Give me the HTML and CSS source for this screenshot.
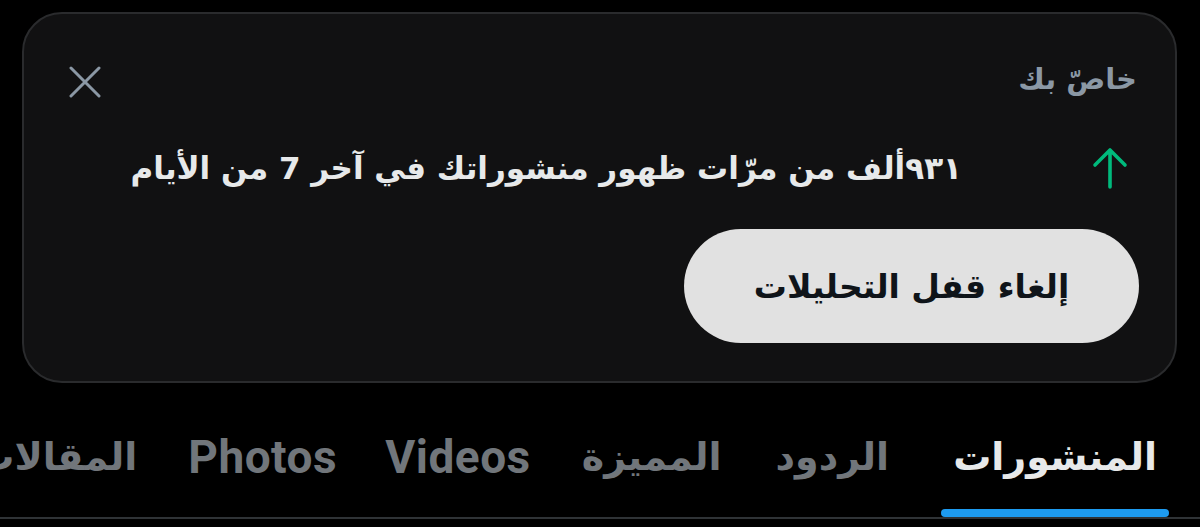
FILE: index.html
```html
<!DOCTYPE html>
<html lang="ar" dir="rtl">
<head>
<meta charset="utf-8">
<title>Profile</title>
<link rel="stylesheet" href="styles.css">
</head>
<body>
  <section class="card">
    <div class="card-head">
      <span class="eyebrow">خاصّ بك</span>
      <button class="close" aria-label="إغلاق">
        <svg viewBox="0 0 32 32" width="32" height="32"><path d="M2 2 L30 30 M30 2 L2 30" stroke="#8b98a5" stroke-width="3" stroke-linecap="round" fill="none"/></svg>
      </button>
    </div>
    <div class="stat">
      <svg class="arrow" viewBox="0 0 36 42" width="36" height="42"><path d="M18 40 V3 M3 18 L18 3 L33 18" stroke="#00ba7c" stroke-width="3.6" stroke-linecap="round" stroke-linejoin="round" fill="none"/></svg>
      <p class="stat-text">٩٣١ألف من مرّات ظهور منشوراتك في آخر 7 من الأيام</p>
    </div>
    <button class="cta">إلغاء قفل التحليلات</button>
  </section>
  <nav class="tabs">
    <a class="tab active"><span class="tab-inner"><span class="label">المنشورات</span><span class="bar"></span></span></a>
    <a class="tab"><span class="tab-inner"><span class="label">الردود</span><span class="bar"></span></span></a>
    <a class="tab"><span class="tab-inner"><span class="label">المميزة</span><span class="bar"></span></span></a>
    <a class="tab"><span class="tab-inner"><span class="label latin">Videos</span><span class="bar"></span></span></a>
    <a class="tab"><span class="tab-inner"><span class="label latin">Photos</span><span class="bar"></span></span></a>
    <a class="tab"><span class="tab-inner"><span class="label">المقالات</span><span class="bar"></span></span></a>
  </nav>
</body>
</html>
```
FILE: styles.css
```css
* { box-sizing: border-box; }
html, body {
  margin: 0;
  padding: 0;
  background: #000;
  width: 1200px;
  height: 527px;
  overflow: hidden;
}
body {
  font-family: "DejaVu Sans", sans-serif;
  color: #e7e9ea;
}
.card {
  margin: 12px 23px 0 22px;
  height: 371px;
  background: #111112;
  border: 2px solid #2a2b2d;
  border-radius: 40px;
  padding: 45px 37px 0 37px;
  display: flex;
  flex-direction: column;
  align-items: flex-start;
}
.card-head {
  width: 100%;
  height: 40px;
  display: flex;
  justify-content: space-between;
  align-items: center;
}
.eyebrow {
  font-size: 29px;
  font-weight: bold;
  color: #8b98a5;
  line-height: 40px;
  margin-right: 1px;
}
.close {
  background: none;
  border: 0;
  padding: 0;
  margin: 6px 0 0 8px;
  width: 32px;
  height: 32px;
  display: block;
}
.close svg { display: block; }
.stat {
  margin-top: 47px;
  display: flex;
  align-items: center;
  height: 44px;
}
.arrow {
  display: block;
  margin-right: 10px;
  flex: none;
}
.stat-text {
  margin: 0 130px 0 0;
  font-size: 31px;
  font-weight: bold;
  line-height: 44px;
  white-space: nowrap;
  color: #e7e9ea;
}
.cta {
  margin-top: 39px;
  width: 455px;
  height: 114px;
  border: 0;
  border-radius: 57px;
  background: #e1e1e1;
  color: #0f1419;
  font-family: "DejaVu Sans", sans-serif;
  font-size: 33px;
  font-weight: bold;
  padding: 0;
  margin-right: -1px;
}
.tabs {
  display: flex;
  flex-wrap: nowrap;
  overflow: hidden;
  padding: 46px 16px 0 0;
  height: 136px;
  border-bottom: 2px solid #2f3336;
}
.tab {
  flex: none;
  padding: 0 15px;
  text-decoration: none;
}
.tab.active { margin-left: 10px; }
.tab-inner {
  display: flex;
  flex-direction: column;
  align-items: stretch;
}
.label {
  display: block;
  padding: 0 12px;
  font-family: Roboto, "DejaVu Sans", sans-serif;
  font-size: 38px;
  font-weight: bold;
  line-height: 56px;
  white-space: nowrap;
  color: #71767b;
  text-align: center;
}
.label.latin {
  font-size: 46px;
  letter-spacing: 0.5px;
  padding: 0 9px;
}
.bar {
  display: block;
  margin-top: 24px;
  height: 8px;
  border-radius: 4px;
  background: transparent;
}
.tab.active .label { color: #e7e9ea; }
.tab.active .bar { background: #1d9bf0; }
```
